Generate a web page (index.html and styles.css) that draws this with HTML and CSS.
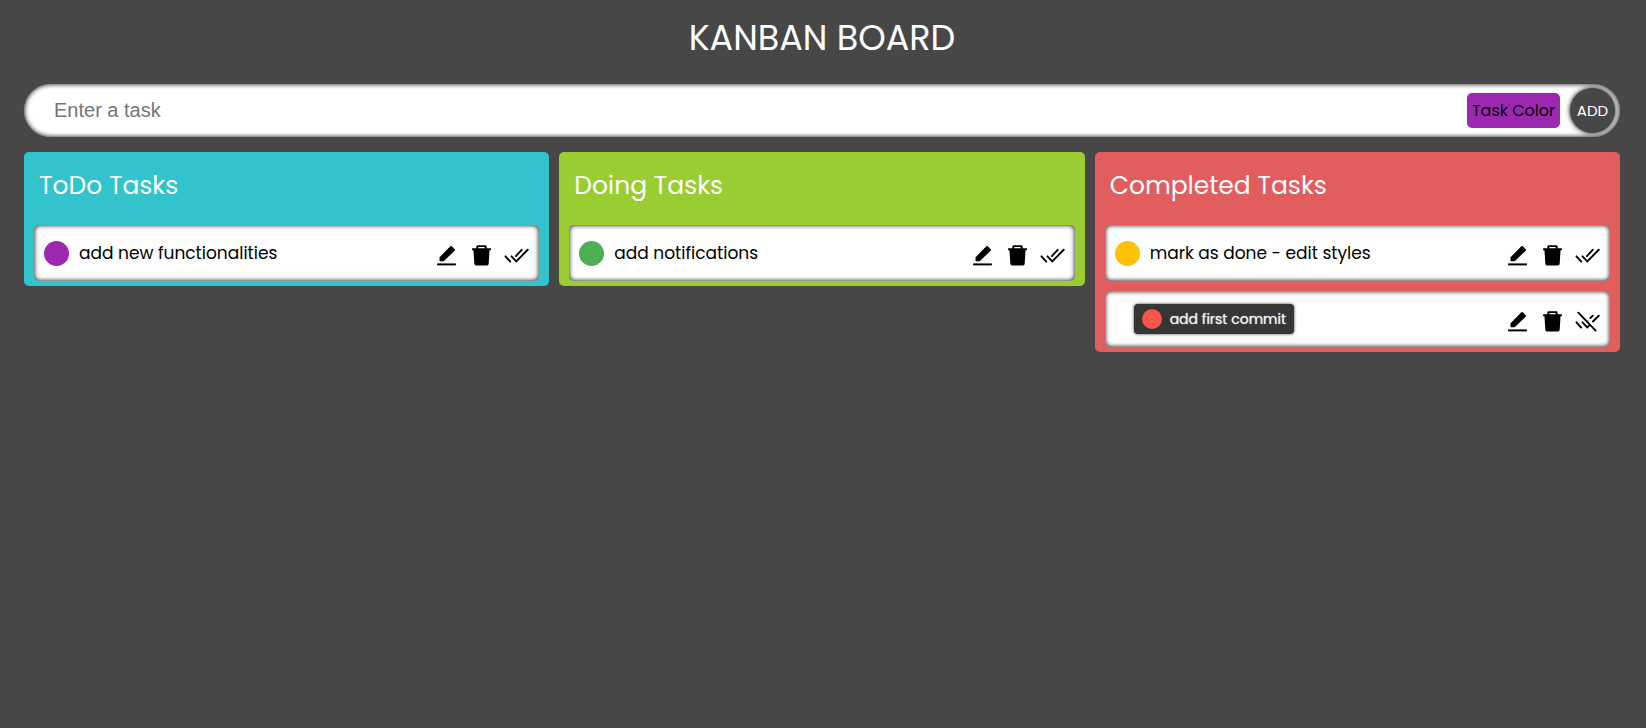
FILE: index.html
```html
<!DOCTYPE html>
<html lang="en">
<head>
<meta charset="utf-8">
<meta name="viewport" content="width=device-width, initial-scale=1">
<title>Kanban Board</title>
<link rel="stylesheet" href="styles.css">
</head>
<body>
<svg class="sprite" aria-hidden="true">
  <symbol id="edit" viewBox="0 0 24 24">
    <path d="M5.400 13.600 15.700 3.200q.7-.7 1.400 0l2.800 2.800q.7.700 0 1.400L9.500 17.200q-.4.400-1 .4H6.200q-.9 0-.9-.9v-2.300q0-.5.1-.8z"/><path d="M3 19.600h18v1.900H3z"/>
  </symbol>
  <symbol id="trash" viewBox="0 0 24 24">
    <path fill-rule="evenodd" d="M7 5V3.500q0-1.300 1.300-1.300h7.400q1.300 0 1.300 1.300V5h4v1.900h-1.300l-.8 13.100q-.1 1.500-1.600 1.500H6.700q-1.500 0-1.600-1.500L4.300 6.900H3V5zm2-1.200V5h6V3.800z"/>
  </symbol>
  <symbol id="done" viewBox="0 0 24 24">
    <path d="M1.400 12.800 6 17.800M7.200 12.800l4.600 4.800L22.800 6.500M11.400 12.600 17 6.500" fill="none" stroke="#000" stroke-width="1.800" stroke-linecap="round"/>
  </symbol>
  <symbol id="undone" viewBox="0 0 24 24">
    <path d="M1.400 12.800 6 17.800M7.200 12.800l4.600 4.800 2.200-2.100M17.200 12l5.600-5.500M11.500 12.500l.5-.5M14.700 8.700 17 6.500M3.200 3.500 19.800 20.700" fill="none" stroke="#000" stroke-width="1.800" stroke-linecap="round"/>
  </symbol>
</svg>
<main class="board">
  <h1 class="board-title">KANBAN BOARD</h1>
  <form class="task-form">
    <input class="task-input" type="text" placeholder="Enter a task" aria-label="Enter a task">
    <button class="color-button" type="button">Task Color</button>
    <button class="add-button" type="button">ADD</button>
  </form>
  <div class="columns">
    <section class="column todo">
      <h2 class="column-title">ToDo Tasks</h2>
      <ul class="cards">
        <li class="card">
          <span class="dot purple"></span><span class="task-name">add new functionalities</span>
          <span class="actions">
            <button class="icon-button" type="button" aria-label="Edit"><svg><use href="#edit"/></svg></button>
            <button class="icon-button" type="button" aria-label="Delete"><svg><use href="#trash"/></svg></button>
            <button class="icon-button" type="button" aria-label="Mark as done"><svg><use href="#done"/></svg></button>
          </span>
        </li>
      </ul>
    </section>
    <section class="column doing">
      <h2 class="column-title">Doing Tasks</h2>
      <ul class="cards">
        <li class="card">
          <span class="dot green"></span><span class="task-name">add notifications</span>
          <span class="actions">
            <button class="icon-button" type="button" aria-label="Edit"><svg><use href="#edit"/></svg></button>
            <button class="icon-button" type="button" aria-label="Delete"><svg><use href="#trash"/></svg></button>
            <button class="icon-button" type="button" aria-label="Mark as done"><svg><use href="#done"/></svg></button>
          </span>
        </li>
      </ul>
    </section>
    <section class="column completed">
      <h2 class="column-title">Completed Tasks</h2>
      <ul class="cards">
        <li class="card">
          <span class="dot amber"></span><span class="task-name">mark as done - edit styles</span>
          <span class="actions">
            <button class="icon-button" type="button" aria-label="Edit"><svg><use href="#edit"/></svg></button>
            <button class="icon-button" type="button" aria-label="Delete"><svg><use href="#trash"/></svg></button>
            <button class="icon-button" type="button" aria-label="Mark as done"><svg><use href="#done"/></svg></button>
          </span>
        </li>
        <li class="card">
          <span class="done-label"><span class="dot small red"></span>add first commit</span>
          <span class="actions">
            <button class="icon-button" type="button" aria-label="Edit"><svg><use href="#edit"/></svg></button>
            <button class="icon-button" type="button" aria-label="Delete"><svg><use href="#trash"/></svg></button>
            <button class="icon-button" type="button" aria-label="Mark as not done"><svg><use href="#undone"/></svg></button>
          </span>
        </li>
      </ul>
    </section>
  </div>
</main>
</body>
</html>
```
FILE: styles.css
```css
* { box-sizing: border-box; }
body {
  margin: 0;
  background: #474747;
  color: #000;
  font-family: Poppins, Inter, "Open Sans", sans-serif;
}
button { font-family: inherit; border: 0; padding: 0; cursor: pointer; }
.sprite { display: none; }
.board { padding: 11px 26px 24px 24px; }
.board-title {
  margin: 0 0 19px;
  color: #fff;
  font-size: 35px;
  font-weight: 400;
  line-height: 54px;
  text-align: center;
}
.task-form {
  display: flex;
  align-items: center;
  height: 53px;
  padding: 0 5px 0 30px;
  border-radius: 27px;
  background: #fff;
  box-shadow: inset 0 0 5px #000;
}
.task-input {
  flex: 1;
  min-width: 0;
  border: 0;
  padding: 0;
  outline: 0;
  background: transparent;
  font-family: "Liberation Sans", Arial, sans-serif;
  font-size: 20px;
}
.task-input::placeholder { color: #757575; }
.color-button {
  height: 35px;
  padding: 0 5px;
  border-radius: 5px;
  background: #9c27b0;
  color: #000;
  font-size: 16px;
}
.add-button {
  width: 45px;
  height: 45px;
  margin-left: 10px;
  border-radius: 50%;
  background: #474747;
  color: #fff;
  font-size: 15px;
  box-shadow: 0 0 5px #000;
}
.columns {
  display: grid;
  grid-template-columns: repeat(3, 1fr);
  align-items: start;
  gap: 10px;
  margin-top: 15px;
}
.column { padding: 15px 10px 5px; border-radius: 5px; }
.todo { background: #32c3cd; }
.doing { background: #9acd32; }
.completed { background: #e25d5d; }
.column-title {
  margin: 0 5px 20px;
  color: #fff;
  font-size: 25px;
  font-weight: 400;
  line-height: 38px;
}
.cards { display: grid; gap: 10px; margin: 0; padding: 0; list-style: none; }
.card {
  display: flex;
  align-items: center;
  gap: 10px;
  height: 56px;
  padding: 0 10px;
  border-radius: 5px;
  background: #fff;
  box-shadow: inset 0 0 5px #000;
}
.dot { flex: none; width: 25px; height: 25px; border-radius: 50%; }
.small { width: 20px; height: 20px; }
.purple { background: #9c27b0; }
.green { background: #4caf50; }
.amber { background: #ffc107; }
.red { background: #f65549; }
.task-name { font-size: 17px; font-weight: 400; line-height: 26px; }
.done-label {
  display: flex;
  align-items: center;
  gap: 8px;
  height: 30px;
  margin-left: 19px;
  padding: 0 8px;
  border-radius: 4px;
  background: #363636;
  box-shadow: 0 0 3px #333;
  color: #eee;
  font-size: 14px;
  font-weight: 400;
  text-shadow: 0 0 1px #eee;
}
.actions { display: flex; gap: 10px; margin-left: auto; padding-top: 5px; }
.icon-button { width: 25px; height: 25px; background: none; }
.icon-button svg { display: block; width: 25px; height: 25px; }
```
